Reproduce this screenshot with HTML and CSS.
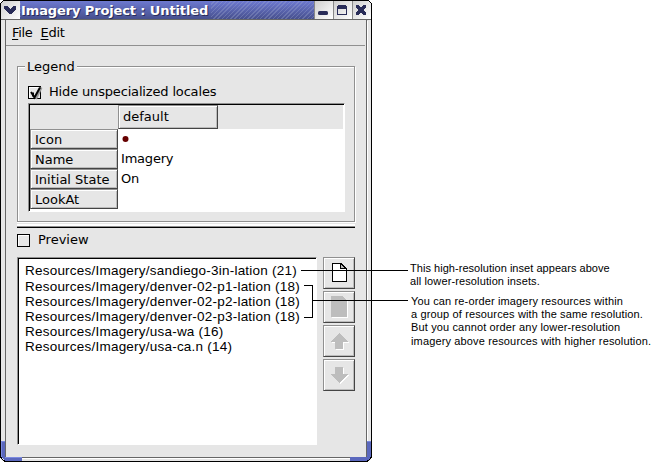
FILE: index.html
```html
<!DOCTYPE html>
<html lang="en">
<head>
<meta charset="utf-8">
<title>Imagery Project : Untitled</title>
<link rel="stylesheet" href="styles.css">
</head>
<body>
<main class="scene">
  <section class="window">
    <header class="titlebar">
      <span class="tb-btn menu-btn"><svg width="18" height="18" shape-rendering="crispEdges"><path fill="#292c58" d="M3 5h3l3 3 3-3h3v3l-5 5H8L3 8z"/></svg></span>
      <h1 class="title"><span>Imagery Project : Untitled</span></h1>
      <span class="tb-btn"><svg width="18" height="18"><rect x="3" y="10" width="10" height="4" rx="1.5" fill="#292c58"/></svg></span>
      <span class="tb-btn"><svg width="18" height="18" shape-rendering="crispEdges"><path fill="#292c58" fill-rule="evenodd" d="M4 4h8v1h1v9H3V5h1zM4 8v5h8V8z"/></svg></span>
      <span class="tb-btn"><svg width="18" height="18" shape-rendering="crispEdges"><path fill="#292c58" d="M3 4h3v1h1v1h2V5h1V4h3v3h-1v1h-1v2h1v1h1v3h-3v-1H9v-1H7v1H6v1H3v-3h1v-1h1V8H4V7H3z"/></svg></span>
    </header>
    <div class="client">
      <nav class="menubar"><span><u>F</u>ile</span><span><u>E</u>dit</span></nav>
      <section class="group">
        <h2 class="legend"><span>Legend</span></h2>
        <label class="check"><i class="box"><svg width="15" height="15"><path d="M8 13L13.5 1.5" stroke="#999" stroke-width="2"/><path d="M3 6l3.500 5.500L12 1.500M5 6.500v4" fill="none" stroke="#000" stroke-width="2"/></svg></i><span class="t-hide">Hide unspecialized locales</span></label>
        <div class="table">
          <div class="thead"><div class="cell head">default</div></div>
          <div class="row"><div class="cell"><span>Icon</span></div><div class="value"><svg width="8" height="8"><circle cx="4.500" cy="4" r="3" fill="#600"/></svg></div></div>
          <div class="row"><div class="cell"><span>Name</span></div><div class="value">Imagery</div></div>
          <div class="row"><div class="cell"><span>Initial State</span></div><div class="value">On</div></div>
          <div class="row"><div class="cell"><span>LookAt</span></div><div class="value"></div></div>
        </div>
      </section>
      <div class="separator"></div>
      <label class="check preview"><i class="box"></i><span>Preview</span></label>
      <div class="panes">
        <ul class="list">
          <li>Resources/Imagery/sandiego-3in-lation (21)</li>
          <li>Resources/Imagery/denver-02-p1-lation (18)</li>
          <li>Resources/Imagery/denver-02-p2-lation (18)</li>
          <li>Resources/Imagery/denver-02-p3-lation (18)</li>
          <li>Resources/Imagery/usa-wa (16)</li>
          <li>Resources/Imagery/usa-ca.n (14)</li>
        </ul>
        <div class="tools">
          <button><svg width="32" height="32" shape-rendering="crispEdges"><path fill="#000" d="M9 6h10v1h1v1h1v1h1v1h1v1h1v14H9z"/><path fill="#fff" d="M10 7h7v5h6v12H10z"/><path d="M18 8h1v1h1v1h1v1h-3z" fill="#bbb"/></svg></button>
          <button><svg width="32" height="32" shape-rendering="crispEdges"><path fill="#fff" d="M9 6h11l5 5v16H9z"/><path fill="#bdbdbd" d="M8 5h11l5 5v16H8z"/></svg></button>
          <button><svg width="32" height="32" shape-rendering="crispEdges"><path fill="#fff" d="M17 9l9 9h-5v7h-8v-7H8z"/><path fill="#bdbdbd" d="M16 8l9 9h-5v7h-8v-7H7z"/></svg></button>
          <button><svg width="32" height="32" shape-rendering="crispEdges"><path fill="#fff" d="M13 9h8v7h5l-9 9-9-9h5z"/><path fill="#bdbdbd" d="M12 8h8v7h5l-9 9-9-9h5z"/></svg></button>
        </div>
      </div>
    </div>
    <svg class="frame" width="372" height="463" shape-rendering="crispEdges">
      <path fill="#5b68bd" d="M1 441h4v16h17v4H5l-4-4zM367 441h4v16l-4 4h-17v-4h17z"/>
      <path fill="#7c8ae0" d="M1 441h4v1H2v15H1zM5 457h17v1H5zM367 441h4v1h-4z"/>
      <path fill="#666" d="M5 441h1v16H5zM366 441h1v16h-1z"/>
      <path fill="#fff" d="M0 0h3v1H2v1H1v1H0zM372 0h-3v1h1v1h1v1h1zM0 463v-5h1v2h1v1h2v1h1v1zM372 463v-5h-1v2h-1v1h-2v1h-1v1z"/>
      <path fill="#000" d="M1 2h1V1h1v1H2v1H1zM370 2h-1V1h1v1h1v1h-1zM1 457h1v2h1v1h2v1H3v-1H2v-1H1zM371 457h-1v2h-1v1h-2v1h2v-1h1v-1h1z"/>
    </svg>
  </section>
  <aside class="notes">
    <p class="n1">This high-resolution inset appears above</p>
    <p class="n2">all lower-resolution insets.</p>
    <p class="n3">You can re-order imagery resources within</p>
    <p class="n4">a group of resources with the same resolution.</p>
    <p class="n5">But you cannot order any lower-resolution</p>
    <p class="n6">imagery above resources with higher resolution.</p>
  </aside>
  <svg class="callouts" width="656" height="463" shape-rendering="crispEdges"><path fill="none" stroke="#000" d="M301 270.500H408M304 285.500h8.500v32H304M312 300.500H408"/></svg>
</main>
</body>
</html>
```

FILE: styles.css
```css
* { box-sizing: border-box; }
body { margin: 0; background: #fff; color: #000; font: 13px/16px "DejaVu Sans", sans-serif; }
h1, h2, p, ul { margin: 0; padding: 0; }
.scene { position: relative; display: flex; width: 656px; height: 463px; overflow: hidden; }
.window { position: relative; width: 372px; height: 462px; border: 1px solid #000; background: #e6e6e6; }
.titlebar { display: flex; height: 19px; border-bottom: 1px solid #666; }
.tb-btn { width: 19px; height: 18px; overflow: hidden; border-left: 1px solid #888; background: linear-gradient(135deg, #cecece, #fff); }
.menu-btn { border-left: 0; }
.tb-btn svg { display: block; }
.title { flex: 1; height: 18px; padding-left: 1px; color: #fff; font: bold 13px/18px "DejaVu Sans", sans-serif; letter-spacing: -.12px; white-space: nowrap; text-shadow: 1px 1px #292c58; background: repeating-linear-gradient(135deg, transparent 0 2px, rgba(155,165,205,.35) 2px 3px), linear-gradient(#6d79d0, #47508e); }
.title span { display: block; width: 190px; height: 18px; line-height: 19px; background: linear-gradient(#6d79d0, #47508e); }
.client { height: 438px; margin: 0 4px; padding: 0 11px; border-left: 1px solid #666; border-right: 1px solid #666; border-bottom: 1px solid #666; box-shadow: 0 1px #fff, 1px 1px #fff; }
.menubar { display: flex; gap: 8px; height: 26px; margin: 0 -10px 0 -11px; padding: 5px 0 0 6px; border-bottom: 1px solid #909090; }
.menubar span { letter-spacing: -.3px; }
u { text-decoration-thickness: 1px; text-underline-offset: 2px; }
.group { height: 156px; margin-top: 20px; padding: 0 10px; border: 1px solid #909090; box-shadow: inset 1px 1px #fff, 1px 1px #fff; }
.legend { height: 18px; margin: -9px 0 0 -3px; font: 13px/18px "DejaVu Sans", sans-serif; }
.legend span { display: inline-block; height: 18px; padding: 0 2px; background: #e6e6e6; }
.check { display: flex; align-items: center; height: 16px; gap: 8px; white-space: nowrap; }
.group .check { margin-top: 8px; }
.box { position: relative; width: 13px; height: 13px; flex: none; border: 1px solid #000; background: #e6e6e6; box-shadow: inset 1px 1px #fff; }
.box svg { position: absolute; left: -1px; top: -1px; }
.t-hide { letter-spacing: -.16px; }
.table { width: 317px; height: 109px; margin-top: 3px; padding: 1px 0 0 1px; border: 1px solid #fff; border-left-color: #909090; border-top-color: #909090; background: #fff; box-shadow: inset 1px 1px #000; }
.thead { height: 24px; margin-right: 1px; padding-left: 88px; background: #e6e6e6; }
.cell { width: 88px; height: 20px; padding: 2px 0 0 4px; border: 1px solid #909090; border-right-color: #444; border-bottom-color: #444; box-shadow: inset 1px 1px #fff, inset -1px -1px #bbb; background: #e6e6e6; white-space: nowrap; }
.head { width: 100px; height: 24px; padding-top: 3px; }
.row { display: flex; height: 20px; }
.value { padding: 2px 0 0 3px; letter-spacing: -.2px; }
.separator { height: 6px; border-bottom: 1px solid #000; background: linear-gradient(#fff 1px, #e6e6e6 1px 2px, #fff 2px 4px, #909090 4px); }
.preview { margin-top: 4px; }
.panes { display: flex; gap: 6px; margin-top: 9px; }
.list { width: 300px; height: 188px; padding: 5px 0 0 7px; list-style: none; border: 1px solid #fff; border-left-color: #909090; border-top-color: #909090; box-shadow: inset 1px 1px #000; background: #fff; font: 13.5px/15px "Liberation Sans", sans-serif; white-space: nowrap; }
.list li { height: 15px; letter-spacing: .22px; }
.list li:first-child { height: 15.500px; }
.tools { display: flex; flex-direction: column; gap: 2px; }
.tools button { width: 32px; height: 32px; padding: 0; border: 1px solid #909090; border-right-color: #444; border-bottom-color: #444; background: #e6e6e6; box-shadow: inset 1px 1px #fff, inset -1px -1px #bbb; overflow: hidden; }
.tools svg { display: block; margin: -1px; }
.frame { position: absolute; left: -1px; top: -1px; }
.notes { padding: 262px 0 0 38px; font: 11px/13px "Liberation Sans", sans-serif; white-space: nowrap; }
.n1 { letter-spacing: .04px; }
.n2 { letter-spacing: .12px; }
.n3 { margin-top: 7px; }
.n3, .n4, .n5, .n6 { padding-left: 1px; letter-spacing: .14px; }
.n6 { margin-top: 1px; }
.callouts { position: absolute; left: 0; top: 0; }
```
